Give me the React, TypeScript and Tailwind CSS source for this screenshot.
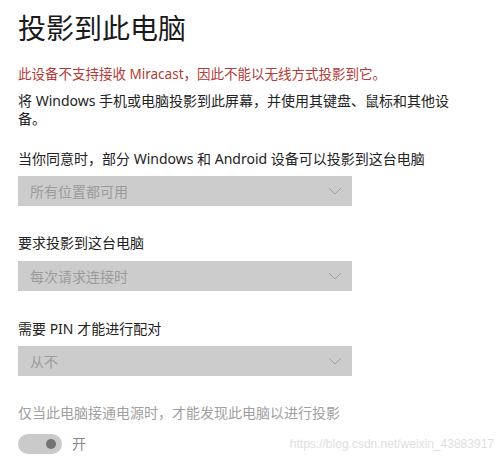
const font = { fontFamily: '"Noto Sans", "Noto Sans CJK SC", sans-serif' }

function Dropdown({ value }: { value: string }) {
  return (
    <div className="flex h-[30px] w-[334px] items-center justify-between bg-[#cccccc] pl-[12px] pr-[10px]">
      <span className="text-[14px] text-[#9b9b9b]">{value}</span>
      <svg width="14" height="8" viewBox="0 0 14 8" fill="none">
        <path d="M1 1l6 6 6-6" stroke="#a0a0a0" strokeWidth="1" />
      </svg>
    </div>
  )
}

export default function App() {
  return (
    <div className="flex h-[460px] w-[500px] flex-col bg-white px-[18px]" style={font}>
      <h1 className="mt-[8px] text-[28px] leading-[40px] text-[#1a1a1a]">投影到此电脑</h1>

      <p className="mt-[16px] text-[13.5px] leading-[20px] text-[#b23a36]">
        此设备不支持接收 Miracast，因此不能以无线方式投影到它。
      </p>
      <p className="mt-[8px] w-[448px] text-[14px] leading-[18px] text-[#222]">
        将 Windows 手机或电脑投影到此屏幕，并使用其键盘、鼠标和其他设备。
      </p>

      <div className="mt-[21px] text-[14px] leading-[20px] text-[#222]">
        当你同意时，部分 Windows 和 Android 设备可以投影到这台电脑
      </div>
      <div className="mt-[7px]">
        <Dropdown value="所有位置都可用" />
      </div>

      <div className="mt-[27px] text-[14px] leading-[20px] text-[#222]">要求投影到这台电脑</div>
      <div className="mt-[8px]">
        <Dropdown value="每次请求连接时" />
      </div>

      <div className="mt-[28px] text-[14px] leading-[20px] text-[#222]">需要 PIN 才能进行配对</div>
      <div className="mt-[7px]">
        <Dropdown value="从不" />
      </div>

      <div className="mt-[27px] text-[14px] leading-[20px] text-[#a0a0a0]">
        仅当此电脑接通电源时，才能发现此电脑以进行投影
      </div>
      <div className="mt-[10px] flex items-center">
        <div className="flex h-[20px] w-[44px] items-center justify-end rounded-full bg-[#cacaca] pr-[6px]">
          <div className="h-[10px] w-[10px] rounded-full bg-[#737373]" />
        </div>
        <span className="ml-[10px] text-[14px] text-[#8a8a8a]">开</span>
        <span className="ml-auto mr-[-12px] text-[12px] text-[#dedede]" style={{ fontFamily: '"Liberation Sans", sans-serif' }}>
          https://blog.csdn.net/weixin_43883917
        </span>
      </div>
    </div>
  )
}
